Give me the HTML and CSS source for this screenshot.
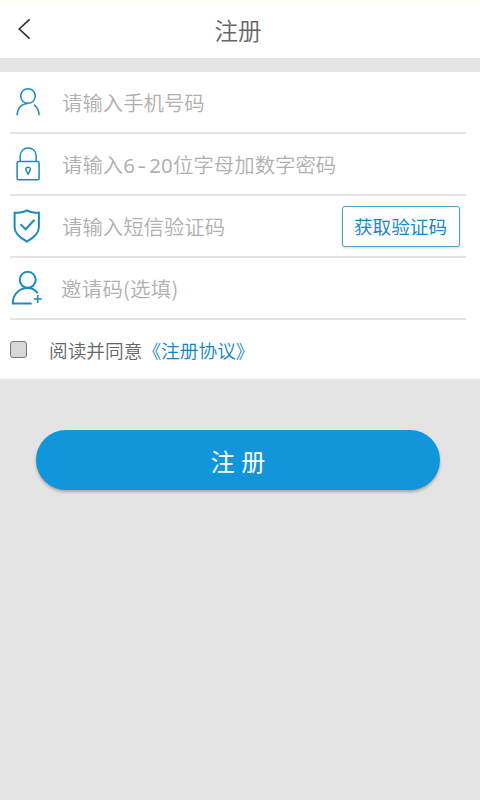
FILE: index.html
```html
<!DOCTYPE html>
<html lang="zh-CN">
<head>
<meta charset="utf-8">
<title>注册</title>
<link rel="stylesheet" href="styles.css">
</head>
<body>
<header class="topbar">
  <svg class="back" width="14" height="22" viewBox="0 0 14 22"><path d="M12.6 1.3 2.3 11 12.6 20.7"/></svg>
  <h1 class="title">注册</h1>
</header>
<main>
  <form class="card">
    <div class="row">
      <svg class="icon" viewBox="0 0 34 40"><circle cx="18" cy="14" r="7.3"/><path d="M7.2 33.3C7.2 26.5 11.5 21.4 18 21.4M24 22.7C27 25 29 28.5 29 33.3"/></svg>
      <span class="hint">请输入手机号码</span>
    </div>
    <div class="row">
      <svg class="icon" viewBox="0 0 34 40"><rect x="7.1" y="17.5" width="22" height="18.2" rx="1.5"/><path d="M10.2 17.5V12C10.2 1.4 26.2 1.4 26.2 12V17.5M18.1 23.2C15.6 23.2 15.2 25.4 16.4 27.2L18.1 30 19.8 27.2C21 25.4 20.6 23.2 18.1 23.2Z"/></svg>
      <span class="hint">请输入<span class="latin">6<span class="dash">-</span>20</span>位字母加数字密码</span>
    </div>
    <div class="row">
      <svg class="icon bold" viewBox="0 0 34 40"><path d="M4.6 6.8C9.5 6.8 13.5 6.2 16.9 4.3 20.3 6.2 24.2 6.8 28.9 6.8V21C28.9 28.5 22.5 32.5 16.9 35.5 11.2 32.5 4.6 28.5 4.6 21ZM10.6 18.3 15.6 23.3 24.5 13.8"/></svg>
      <span class="hint">请输入短信验证码</span>
      <button class="code" type="button">获取验证码</button>
    </div>
    <div class="row">
      <svg class="icon bold" viewBox="0 0 34 40"><circle cx="17.7" cy="11.8" r="8"/><path d="M21.7 35.5H2.8C2.8 26.5 9 19.9 17.7 19.9 21.8 19.9 25.3 21.7 27.7 25.3"/><path class="plus" d="M27.7 27V35M23.7 31H31.7"/></svg>
      <span class="hint invite">邀请码(选填)</span>
    </div>
    <label class="agree">
      <span class="box"></span>
      <span>阅读并同意<a class="link">《注册协议》</a></span>
    </label>
  </form>
  <button class="submit" type="button">注 册</button>
</main>
</body>
</html>
```
FILE: styles.css
```css
* { box-sizing: border-box; }
body {
  margin: 0;
  min-height: 800px;
  background: #e4e4e4;
  font-family: "Noto Sans CJK SC", sans-serif;
  font-weight: 350;
}
.topbar {
  display: grid;
  grid-template-columns: 48px 1fr 52px;
  align-items: center;
  height: 58px;
  border-top: 2px solid #f8fff2;
  background: #fff;
}
.back {
  margin: -3px 0 0 17px;
  fill: none;
  stroke: #333;
  stroke-width: 1.7;
}
.title {
  margin: 0;
  color: #666;
  font-size: 23.6px;
  font-weight: 350;
  line-height: 30px;
  text-align: center;
}
.card {
  height: 307px;
  margin-top: 14px;
  padding: 0 14px 0 10px;
  background: #fff;
}
.row {
  display: flex;
  align-items: center;
  height: 62px;
  border-bottom: 2px solid #e4e4e4;
}
.icon {
  flex: none;
  width: 34px;
  height: 40px;
  margin-right: 18px;
  fill: none;
  stroke: #1c8bc1;
  stroke-width: 1.5;
}
.bold { stroke-width: 2; }
.plus { stroke-width: 1.6; }
.hint {
  flex: 1;
  color: #b0b0b0;
  font-size: 20.4px;
  line-height: 30px;
  white-space: nowrap;
}
.invite { margin-left: -1px; letter-spacing: .3px; }
.latin {
  font-family: "Noto Sans", sans-serif;
  font-weight: 400;
  line-height: 1;
  letter-spacing: .3px;
}
.dash {
  display: inline-block;
  width: 14px;
  text-align: center;
  transform: scaleX(1.3);
}
.code {
  width: 118px;
  height: 41px;
  margin-right: 6.5px;
  padding: 0;
  border: 1.5px solid #4ba3cc;
  border-radius: 3px;
  background: #fff;
  box-shadow: 0 1px 3px rgba(0, 0, 0, .16);
  color: #148bcb;
  font: 400 18.6px/30px "Noto Sans CJK SC", sans-serif;
}
.agree {
  display: flex;
  align-items: center;
  height: 58px;
  gap: 22px;
  color: #666;
  font-size: 18.7px;
}
.box {
  width: 17px;
  height: 17px;
  border: 1px solid #777;
  border-radius: 3px;
  background: #d8d8d8;
}
.link { color: #1485c2; }
.submit {
  display: block;
  width: 404px;
  height: 60px;
  margin: 51px 0 0 36px;
  padding: 2px 0 0;
  border: 0;
  border-radius: 30px;
  background: #1296db;
  box-shadow: 0 2px 3px rgba(0, 0, 0, .28);
  color: #fff;
  font: 400 24px/30px "Noto Sans CJK SC", sans-serif;
  word-spacing: 1px;
}
```
